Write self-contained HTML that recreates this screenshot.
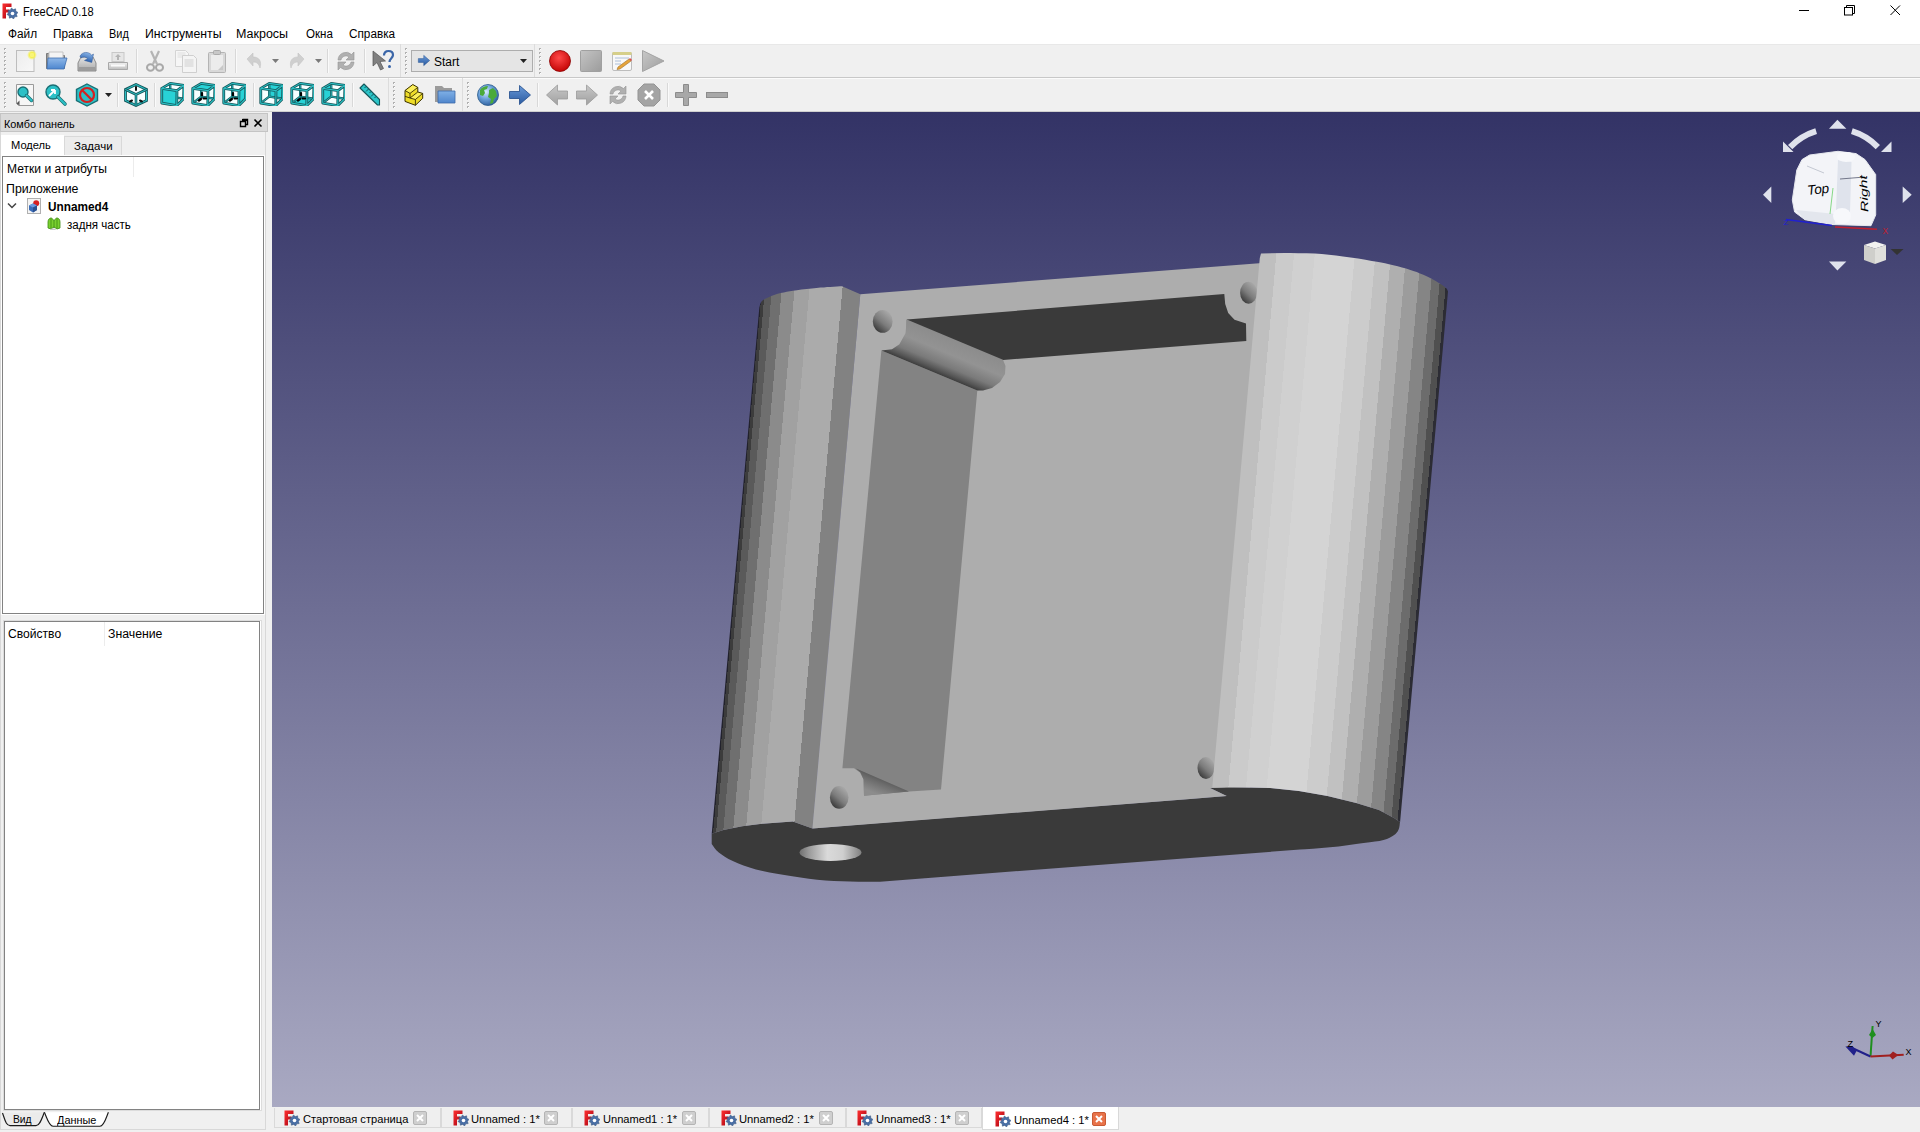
<!DOCTYPE html><html><head><meta charset="utf-8"><title>FreeCAD 0.18</title><style>
*{box-sizing:border-box}
html,body{margin:0;padding:0}
body{width:1920px;height:1132px;overflow:hidden;position:relative;background:#f0f0f0;font-family:"Liberation Sans",sans-serif}
.t{position:absolute;white-space:nowrap;line-height:1;font-family:"Liberation Sans",sans-serif}
.ic{position:absolute}
</style></head><body><div style="position:absolute;left:0px;top:0px;width:1920px;height:44px;background:#fff"></div><div style="position:absolute;left:0px;top:44px;width:1920px;height:1px;background:#e8e8e8"></div><svg class="ic" style="left:2px;top:3px" width="16" height="16" viewBox="0 0 16 16"><defs><linearGradient id="gFt" x1="0" y1="0" x2="1" y2="1"><stop offset="0" stop-color="#ff3030"/><stop offset="1" stop-color="#a00010"/></linearGradient></defs><path d="M0.5 0.5h9v3.5h-5.5v2.5h3.5v3h-3.5v6h-3.5z" fill="url(#gFt)"/><polygon points="15.99,9.41 14.42,11.28 15.16,13.61 12.72,13.83 11.59,15.99 9.72,14.42 7.39,15.16 7.17,12.72 5.01,11.59 6.58,9.72 5.84,7.39 8.28,7.17 9.41,5.01 11.28,6.58 13.61,5.84 13.83,8.28" fill="#4a6fa5" stroke="#33507a" stroke-width="0.5"/><circle cx="10.5" cy="10.5" r="1.8" fill="#fff"/></svg><svg class="ic" style="left:1790px;top:0" width="130" height="22"><path d="M9 10.5h10" stroke="#000" stroke-width="1"/><rect x="54.5" y="7.5" width="8" height="7.5" fill="none" stroke="#000"/><path d="M56.5 7.5v-2h8v8h-2" fill="none" stroke="#000"/><path d="M100.5 5.5l9.5 9.5M110 5.5l-9.5 9.5" stroke="#000" stroke-width="1"/></svg><div style="position:absolute;left:0px;top:77px;width:1920px;height:1px;background:#c8c8c8"></div><div style="position:absolute;left:0px;top:78px;width:1920px;height:1px;background:#fbfbfb"></div><div style="position:absolute;left:0px;top:111px;width:1920px;height:1px;background:#cfcfcf"></div><div style="position:absolute;left:4px;top:48px;width:2px;height:2px;background:#b0b0b0"></div><div style="position:absolute;left:5px;top:49px;width:1px;height:1px;background:#fff"></div><div style="position:absolute;left:4px;top:52px;width:2px;height:2px;background:#b0b0b0"></div><div style="position:absolute;left:5px;top:53px;width:1px;height:1px;background:#fff"></div><div style="position:absolute;left:4px;top:56px;width:2px;height:2px;background:#b0b0b0"></div><div style="position:absolute;left:5px;top:57px;width:1px;height:1px;background:#fff"></div><div style="position:absolute;left:4px;top:60px;width:2px;height:2px;background:#b0b0b0"></div><div style="position:absolute;left:5px;top:61px;width:1px;height:1px;background:#fff"></div><div style="position:absolute;left:4px;top:64px;width:2px;height:2px;background:#b0b0b0"></div><div style="position:absolute;left:5px;top:65px;width:1px;height:1px;background:#fff"></div><div style="position:absolute;left:4px;top:68px;width:2px;height:2px;background:#b0b0b0"></div><div style="position:absolute;left:5px;top:69px;width:1px;height:1px;background:#fff"></div><div style="position:absolute;left:4px;top:72px;width:2px;height:2px;background:#b0b0b0"></div><div style="position:absolute;left:5px;top:73px;width:1px;height:1px;background:#fff"></div><svg class="ic" style="left:14px;top:49px" width="24" height="24" viewBox="0 0 24 24"><defs><radialGradient id="gsun"><stop offset="0" stop-color="#ffffa0"/><stop offset="0.5" stop-color="#f5f04a"/><stop offset="1" stop-color="#f5f04a" stop-opacity="0"/></radialGradient><linearGradient id="gpg" x1="0" y1="0" x2="1" y2="1"><stop offset="0" stop-color="#ececec"/><stop offset="1" stop-color="#f8f8f8"/></linearGradient></defs><rect x="2.5" y="1.5" width="17.5" height="21" fill="url(#gpg)" stroke="#bdbdbd"/><circle cx="18" cy="6" r="5" fill="url(#gsun)"/><circle cx="18" cy="6" r="2.2" fill="#f8f47a"/></svg><svg class="ic" style="left:44px;top:48px" width="24" height="24" viewBox="0 0 24 24"><defs><linearGradient id="gfo" x1="0" y1="0" x2="0" y2="1"><stop offset="0" stop-color="#8fb8e8"/><stop offset="1" stop-color="#4d86cf"/></linearGradient></defs><path d="M2.5 5.5h8l2 2h8v13h-18z" fill="#9a9a9a" stroke="#7a7a7a"/><path d="M5 4h14v12H5z" fill="#f4f4f4" stroke="#c4c4c4"/><path d="M4 10h19l-3 11H3z" fill="url(#gfo)" stroke="#3f6fb0" stroke-width="0.8"/></svg><svg class="ic" style="left:75px;top:49px" width="24" height="24" viewBox="0 0 24 24"><defs><linearGradient id="gsv" x1="0" y1="0" x2="0" y2="1"><stop offset="0" stop-color="#e4e4e4"/><stop offset="1" stop-color="#a8a8a8"/></linearGradient><linearGradient id="gar" x1="0" y1="0" x2="0" y2="1"><stop offset="0" stop-color="#8ab4e6"/><stop offset="1" stop-color="#2f64b0"/></linearGradient></defs><path d="M3 14l3-6h12l3 6v8H3z" fill="url(#gsv)" stroke="#8a8a8a"/><rect x="4" y="18" width="16" height="3" fill="#9c9c9c"/><path d="M5 9c1-5 7-7 11-4l1.5-1.5L18 12h-7.5l2.5-2.5c-2-1.5-5-1-6.5 1z" fill="url(#gar)" stroke="#2f5a9a" stroke-width="0.5" transform="rotate(15 12 8)"/></svg><svg class="ic" style="left:106px;top:49px" width="24" height="24" viewBox="0 0 24 24"><defs><linearGradient id="gex" x1="0" y1="0" x2="0" y2="1"><stop offset="0" stop-color="#f0f0f0"/><stop offset="1" stop-color="#bdbdbd"/></linearGradient></defs><rect x="6" y="3.5" width="12" height="9" fill="#e6e6e6" stroke="#c8c8c8"/><path d="M12 5l3 3h-2v3h-2V8H9z" fill="#b4b4b4"/><path d="M2.5 13.5h19v7h-19z" fill="url(#gex)" stroke="#a8a8a8"/><rect x="5" y="15.5" width="14" height="2" fill="#fafafa"/></svg><div style="position:absolute;left:136px;top:49px;width:1px;height:24px;background:#d8d8d8"></div><div style="position:absolute;left:137px;top:49px;width:1px;height:24px;background:#fafafa"></div><svg class="ic" style="left:143px;top:49px" width="24" height="24" viewBox="0 0 24 24"><path d="M8 2l6 13M16 2l-6 13" stroke="#b4b4b4" stroke-width="2.2" fill="none"/><ellipse cx="7.5" cy="18.5" rx="3.5" ry="3.2" fill="none" stroke="#a8a8a8" stroke-width="2"/><ellipse cx="16.5" cy="18.5" rx="3.5" ry="3.2" fill="none" stroke="#a8a8a8" stroke-width="2"/></svg><svg class="ic" style="left:174px;top:49px" width="24" height="24" viewBox="0 0 24 24"><path d="M1.5 1.5h10l3 3v13h-13z" fill="#f6f6f6" stroke="#d4d4d4"/><path d="M3.5 4h8M3.5 6h8M3.5 8h8" stroke="#dedede"/><path d="M8.5 6.5h11l3 3v14h-14z" fill="#f4f4f4" stroke="#cfcfcf"/><rect x="10.5" y="10" width="9" height="8" fill="#e2e2e2"/></svg><svg class="ic" style="left:205px;top:49px" width="24" height="24" viewBox="0 0 24 24"><rect x="3.5" y="3.5" width="17" height="20" rx="1" fill="#d8d8d8" stroke="#b4b4b4"/><rect x="6" y="6" width="12" height="15" fill="#ececec"/><rect x="8.5" y="1.5" width="7" height="4" rx="1" fill="#c8c8c8" stroke="#ababab"/><path d="M13 21l5-5v5z" fill="#c8c8c8"/></svg><div style="position:absolute;left:235px;top:49px;width:1px;height:24px;background:#d8d8d8"></div><div style="position:absolute;left:236px;top:49px;width:1px;height:24px;background:#fafafa"></div><svg class="ic" style="left:242px;top:49px" width="24" height="24" viewBox="0 0 24 24"><path d="M5 10l6-6v4c6 0 9 4 7 11-1-4-3-6-7-6v4z" fill="#cfcfcf" stroke="#c4c4c4" stroke-width="0.6"/></svg><svg class="ic" style="left:272px;top:59px" width="7" height="4" viewBox="0 0 7 4"><path d="M0 0h7l-3.5 4z" fill="#7a7a7a"/></svg><svg class="ic" style="left:285px;top:49px" width="24" height="24" viewBox="0 0 24 24"><path d="M19 10l-6-6v4c-6 0-9 4-7 11 1-4 3-6 7-6v4z" fill="#cfcfcf" stroke="#c4c4c4" stroke-width="0.6"/></svg><svg class="ic" style="left:315px;top:59px" width="7" height="4" viewBox="0 0 7 4"><path d="M0 0h7l-3.5 4z" fill="#7a7a7a"/></svg><div style="position:absolute;left:327px;top:49px;width:1px;height:24px;background:#d8d8d8"></div><div style="position:absolute;left:328px;top:49px;width:1px;height:24px;background:#fafafa"></div><svg class="ic" style="left:334px;top:49px" width="24" height="24" viewBox="0 0 24 24"><path d="M4 11a8 8 0 0 1 13.5-5.5L20 3v8h-8l3-3A5 5 0 0 0 7 11z" fill="#b0b0b0" stroke="#969696" stroke-width="0.6"/><path d="M20 13a8 8 0 0 1-13.5 5.5L4 21v-8h8l-3 3a5 5 0 0 0 8-3z" fill="#b0b0b0" stroke="#969696" stroke-width="0.6"/></svg><div style="position:absolute;left:364px;top:49px;width:1px;height:24px;background:#d8d8d8"></div><div style="position:absolute;left:365px;top:49px;width:1px;height:24px;background:#fafafa"></div><svg class="ic" style="left:371px;top:49px" width="24" height="24" viewBox="0 0 24 24"><path d="M2 2l0 15 4-3.5 3.5 7.5 3-1.5-3.5-7 5.5-.5z" fill="#808080" stroke="#555" stroke-width="0.7"/><path d="M13 6.5c0-3 2-4.5 4.5-4.5S22 3.5 22 6c0 3-3.5 3.5-3.5 7" fill="none" stroke="#3b66a8" stroke-width="2.2"/><circle cx="18.5" cy="17.5" r="1.5" fill="#3b66a8"/></svg><div style="position:absolute;left:400px;top:44px;width:1px;height:33px;background:#dcdcdc"></div><div style="position:absolute;left:405px;top:48px;width:2px;height:2px;background:#b0b0b0"></div><div style="position:absolute;left:406px;top:49px;width:1px;height:1px;background:#fff"></div><div style="position:absolute;left:405px;top:52px;width:2px;height:2px;background:#b0b0b0"></div><div style="position:absolute;left:406px;top:53px;width:1px;height:1px;background:#fff"></div><div style="position:absolute;left:405px;top:56px;width:2px;height:2px;background:#b0b0b0"></div><div style="position:absolute;left:406px;top:57px;width:1px;height:1px;background:#fff"></div><div style="position:absolute;left:405px;top:60px;width:2px;height:2px;background:#b0b0b0"></div><div style="position:absolute;left:406px;top:61px;width:1px;height:1px;background:#fff"></div><div style="position:absolute;left:405px;top:64px;width:2px;height:2px;background:#b0b0b0"></div><div style="position:absolute;left:406px;top:65px;width:1px;height:1px;background:#fff"></div><div style="position:absolute;left:405px;top:68px;width:2px;height:2px;background:#b0b0b0"></div><div style="position:absolute;left:406px;top:69px;width:1px;height:1px;background:#fff"></div><div style="position:absolute;left:405px;top:72px;width:2px;height:2px;background:#b0b0b0"></div><div style="position:absolute;left:406px;top:73px;width:1px;height:1px;background:#fff"></div><div style="position:absolute;left:411px;top:50px;width:122px;height:22px;background:#e5e5e5;border:1px solid #adadad"></div><svg class="ic" style="left:417px;top:54px" width="14" height="13" viewBox="0 0 24 24"><defs><linearGradient id="gba" x1="0" y1="0" x2="0" y2="1"><stop offset="0" stop-color="#6a9ad8"/><stop offset="1" stop-color="#2a5aa0"/></linearGradient></defs><path d="M1.5 8.5h10v-6l11 9.5-11 9.5v-6h-10z" fill="url(#gba)" stroke="#1f4a8a" stroke-width="0.8"/></svg><svg class="ic" style="left:520px;top:59px" width="7" height="4" viewBox="0 0 7 4"><path d="M0 0h7l-3.5 4z" fill="#222"/></svg><div style="position:absolute;left:534px;top:44px;width:1px;height:33px;background:#dcdcdc"></div><div style="position:absolute;left:539px;top:48px;width:2px;height:2px;background:#b0b0b0"></div><div style="position:absolute;left:540px;top:49px;width:1px;height:1px;background:#fff"></div><div style="position:absolute;left:539px;top:52px;width:2px;height:2px;background:#b0b0b0"></div><div style="position:absolute;left:540px;top:53px;width:1px;height:1px;background:#fff"></div><div style="position:absolute;left:539px;top:56px;width:2px;height:2px;background:#b0b0b0"></div><div style="position:absolute;left:540px;top:57px;width:1px;height:1px;background:#fff"></div><div style="position:absolute;left:539px;top:60px;width:2px;height:2px;background:#b0b0b0"></div><div style="position:absolute;left:540px;top:61px;width:1px;height:1px;background:#fff"></div><div style="position:absolute;left:539px;top:64px;width:2px;height:2px;background:#b0b0b0"></div><div style="position:absolute;left:540px;top:65px;width:1px;height:1px;background:#fff"></div><div style="position:absolute;left:539px;top:68px;width:2px;height:2px;background:#b0b0b0"></div><div style="position:absolute;left:540px;top:69px;width:1px;height:1px;background:#fff"></div><div style="position:absolute;left:539px;top:72px;width:2px;height:2px;background:#b0b0b0"></div><div style="position:absolute;left:540px;top:73px;width:1px;height:1px;background:#fff"></div><svg class="ic" style="left:548px;top:49px" width="24" height="24" viewBox="0 0 24 24"><defs><radialGradient id="grec" cx="0.45" cy="0.35" r="0.7"><stop offset="0" stop-color="#ff4a4a"/><stop offset="1" stop-color="#c00000"/></radialGradient></defs><circle cx="12" cy="12" r="10.5" fill="url(#grec)" stroke="#8a0000" stroke-width="0.8"/></svg><svg class="ic" style="left:579px;top:49px" width="24" height="24" viewBox="0 0 24 24"><defs><linearGradient id="gst" x1="0" y1="0" x2="1" y2="1"><stop offset="0" stop-color="#c4c4c4"/><stop offset="1" stop-color="#9c9c9c"/></linearGradient></defs><rect x="1.5" y="1.5" width="21" height="21" rx="1" fill="url(#gst)" stroke="#a0a0a0"/></svg><svg class="ic" style="left:610px;top:49px" width="24" height="24" viewBox="0 0 24 24"><rect x="2.5" y="3.5" width="19" height="18" rx="1.5" fill="#f8f8f8" stroke="#bdbdbd"/><rect x="2.5" y="3" width="19" height="3" fill="#d6cf8a"/><path d="M5 9h14M5 12h6M5 15h6" stroke="#9ab0d0" stroke-width="0.8"/><path d="M8 18l11-8 2 2-11 8-3 .5z" fill="#e6a43a" stroke="#a0702a" stroke-width="0.6"/><path d="M19 10l2 2 1-1-2-2z" fill="#e04a4a"/></svg><svg class="ic" style="left:641px;top:49px" width="24" height="24" viewBox="0 0 24 24"><defs><linearGradient id="gpl" x1="0" y1="0" x2="1" y2="1"><stop offset="0" stop-color="#c8c8c8"/><stop offset="1" stop-color="#9e9e9e"/></linearGradient></defs><path d="M1.5 1.5L23 12 1.5 22.5z" fill="url(#gpl)" stroke="#a4a4a4"/></svg><div style="position:absolute;left:4px;top:82px;width:2px;height:2px;background:#b0b0b0"></div><div style="position:absolute;left:5px;top:83px;width:1px;height:1px;background:#fff"></div><div style="position:absolute;left:4px;top:86px;width:2px;height:2px;background:#b0b0b0"></div><div style="position:absolute;left:5px;top:87px;width:1px;height:1px;background:#fff"></div><div style="position:absolute;left:4px;top:90px;width:2px;height:2px;background:#b0b0b0"></div><div style="position:absolute;left:5px;top:91px;width:1px;height:1px;background:#fff"></div><div style="position:absolute;left:4px;top:94px;width:2px;height:2px;background:#b0b0b0"></div><div style="position:absolute;left:5px;top:95px;width:1px;height:1px;background:#fff"></div><div style="position:absolute;left:4px;top:98px;width:2px;height:2px;background:#b0b0b0"></div><div style="position:absolute;left:5px;top:99px;width:1px;height:1px;background:#fff"></div><div style="position:absolute;left:4px;top:102px;width:2px;height:2px;background:#b0b0b0"></div><div style="position:absolute;left:5px;top:103px;width:1px;height:1px;background:#fff"></div><div style="position:absolute;left:4px;top:106px;width:2px;height:2px;background:#b0b0b0"></div><div style="position:absolute;left:5px;top:107px;width:1px;height:1px;background:#fff"></div><svg class="ic" style="left:14px;top:83px" width="24" height="24" viewBox="0 0 24 24"><path d="M2.5 1.5h17v21h-15l-2-2z" fill="#f6f6f6" stroke="#9a9a9a"/><path d="M2.5 20.5l3-3v5z" fill="#555"/><circle cx="9" cy="9" r="5" fill="#2cc0c6" stroke="#1a6f74" stroke-width="1.4"/><path d="M12.5 12.5l5 5" stroke="#1a6f74" stroke-width="3.4" stroke-linecap="round"/><path d="M12.5 12.5l5 5" stroke="#2cc0c6" stroke-width="2" stroke-linecap="round"/></svg><svg class="ic" style="left:44px;top:83px" width="24" height="24" viewBox="0 0 24 24"><circle cx="9" cy="9" r="7" fill="#2cc0c6" stroke="#1a6f74" stroke-width="1.4"/><path d="M14 14l7 7" stroke="#1a6f74" stroke-width="3.6" stroke-linecap="round"/><path d="M14 14l7 7" stroke="#2cc0c6" stroke-width="2.2" stroke-linecap="round"/><path d="M5 13l6-6M11 7h-4M11 7v4" stroke="#fff" stroke-width="1.8" fill="none"/></svg><svg class="ic" style="left:75px;top:83px" width="24" height="24" viewBox="0 0 24 24"><polygon points="12,1 22.5,6.5 22.5,17.5 12,23 1.5,17.5 1.5,6.5" fill="#2cc0c6" stroke="#1a6f74" stroke-width="1.4"/><circle cx="12" cy="12" r="7" fill="none" stroke="#d62020" stroke-width="2.2"/><path d="M7 7l10 10" stroke="#d62020" stroke-width="2.2"/></svg><svg class="ic" style="left:105px;top:93px" width="7" height="4" viewBox="0 0 7 4"><path d="M0 0h7l-3.5 4z" fill="#222"/></svg><div style="position:absolute;left:117px;top:83px;width:1px;height:24px;background:#d8d8d8"></div><div style="position:absolute;left:118px;top:83px;width:1px;height:24px;background:#fafafa"></div><svg class="ic" style="left:124px;top:83px" width="24" height="24" viewBox="0 0 24 24"><polygon points="12,1.5 22.5,6.5 22.5,17.5 12,22.5 1.5,17.5 1.5,6.5" fill="#f6ffff" stroke="#15585c" stroke-width="2.8"/><polygon points="12,1.5 22.5,6.5 22.5,17.5 12,22.5 1.5,17.5 1.5,6.5" fill="none" stroke="#2bbfc3" stroke-width="1.1"/><path d="M1.5 6.5L12 11.5l10.5-5M12 11.5v11" fill="none" stroke="#15585c" stroke-width="2.6"/><path d="M1.5 6.5L12 11.5l10.5-5M12 11.5v11" fill="none" stroke="#2bbfc3" stroke-width="1"/><path d="M12 4v3M6 18.5l2-1M18 18.5l-2-1" stroke="#111" stroke-width="2" stroke-linecap="round"/></svg><div style="position:absolute;left:154px;top:83px;width:1px;height:24px;background:#d8d8d8"></div><div style="position:absolute;left:155px;top:83px;width:1px;height:24px;background:#fafafa"></div><svg class="ic" style="left:160px;top:82px" width="24" height="24" viewBox="0 0 24 24"><polygon points="1.75,6.4 10.2,1.4 23.9,3.3 23.6,16.75 16.75,23.6 1.75,21.1" fill="#f6ffff"/><path d="M10.2 1.4L10.2 14.6L23.6 16.75M10.2 14.6L1.75 21.1" fill="none" stroke="#15585c" stroke-width="2.4"/><path d="M10.2 1.4L10.2 14.6L23.6 16.75M10.2 14.6L1.75 21.1" fill="none" stroke="#2bbfc3" stroke-width="0.9"/><polygon points="1.75,6.4 17,8.6 16.75,23.6 1.75,21.1" fill="#28d2d6"/><path d="M1.75,6.4 17,8.6 16.75,23.6 1.75,21.1ZM1.75 6.4L10.2 1.4L23.9 3.3L23.6 16.75L16.75 23.6M17 8.6L23.9 3.3" fill="none" stroke="#15585c" stroke-width="2.8" stroke-linejoin="round"/><path d="M1.75,6.4 17,8.6 16.75,23.6 1.75,21.1ZM1.75 6.4L10.2 1.4L23.9 3.3L23.6 16.75L16.75 23.6M17 8.6L23.9 3.3" fill="none" stroke="#2bbfc3" stroke-width="1.1" stroke-linejoin="round"/></svg><svg class="ic" style="left:191px;top:82px" width="24" height="24" viewBox="0 0 24 24"><polygon points="1.75,6.4 10.2,1.4 23.9,3.3 23.6,16.75 16.75,23.6 1.75,21.1" fill="#f6ffff"/><path d="M10.2 1.4L10.2 14.6L23.6 16.75M10.2 14.6L1.75 21.1" fill="none" stroke="#15585c" stroke-width="2.4"/><path d="M10.2 1.4L10.2 14.6L23.6 16.75M10.2 14.6L1.75 21.1" fill="none" stroke="#2bbfc3" stroke-width="0.9"/><polygon points="1.75,6.4 10.2,1.4 23.9,3.3 17,8.6" fill="#28d2d6"/><path d="M1.75,6.4 17,8.6 16.75,23.6 1.75,21.1ZM1.75 6.4L10.2 1.4L23.9 3.3L23.6 16.75L16.75 23.6M17 8.6L23.9 3.3" fill="none" stroke="#15585c" stroke-width="2.8" stroke-linejoin="round"/><path d="M1.75,6.4 17,8.6 16.75,23.6 1.75,21.1ZM1.75 6.4L10.2 1.4L23.9 3.3L23.6 16.75L16.75 23.6M17 8.6L23.9 3.3" fill="none" stroke="#2bbfc3" stroke-width="1.1" stroke-linejoin="round"/><path d="M11 11v2.5M8 18.5l2-1.5M12.5 16.5h2.5" stroke="#000" stroke-width="2.2" stroke-linecap="round"/></svg><svg class="ic" style="left:222px;top:82px" width="24" height="24" viewBox="0 0 24 24"><polygon points="1.75,6.4 10.2,1.4 23.9,3.3 23.6,16.75 16.75,23.6 1.75,21.1" fill="#f6ffff"/><path d="M10.2 1.4L10.2 14.6L23.6 16.75M10.2 14.6L1.75 21.1" fill="none" stroke="#15585c" stroke-width="2.4"/><path d="M10.2 1.4L10.2 14.6L23.6 16.75M10.2 14.6L1.75 21.1" fill="none" stroke="#2bbfc3" stroke-width="0.9"/><polygon points="17,8.6 23.9,3.3 23.6,16.75 16.75,23.6" fill="#28d2d6"/><path d="M1.75,6.4 17,8.6 16.75,23.6 1.75,21.1ZM1.75 6.4L10.2 1.4L23.9 3.3L23.6 16.75L16.75 23.6M17 8.6L23.9 3.3" fill="none" stroke="#15585c" stroke-width="2.8" stroke-linejoin="round"/><path d="M1.75,6.4 17,8.6 16.75,23.6 1.75,21.1ZM1.75 6.4L10.2 1.4L23.9 3.3L23.6 16.75L16.75 23.6M17 8.6L23.9 3.3" fill="none" stroke="#2bbfc3" stroke-width="1.1" stroke-linejoin="round"/><path d="M11 11v2.5M8 18.5l2-1.5M12.5 16.5h2.5" stroke="#000" stroke-width="2.2" stroke-linecap="round"/></svg><div style="position:absolute;left:253px;top:83px;width:1px;height:24px;background:#d8d8d8"></div><div style="position:absolute;left:254px;top:83px;width:1px;height:24px;background:#fafafa"></div><svg class="ic" style="left:259px;top:82px" width="24" height="24" viewBox="0 0 24 24"><polygon points="1.75,6.4 10.2,1.4 23.9,3.3 23.6,16.75 16.75,23.6 1.75,21.1" fill="#f6ffff"/><polygon points="10.2,1.4 23.9,3.3 23.6,16.75 10.2,14.6" fill="#28d2d6"/><path d="M10.2 1.4L10.2 14.6L23.6 16.75M10.2 14.6L1.75 21.1" fill="none" stroke="#15585c" stroke-width="2.4"/><path d="M10.2 1.4L10.2 14.6L23.6 16.75M10.2 14.6L1.75 21.1" fill="none" stroke="#2bbfc3" stroke-width="0.9"/><path d="M1.75,6.4 17,8.6 16.75,23.6 1.75,21.1ZM1.75 6.4L10.2 1.4L23.9 3.3L23.6 16.75L16.75 23.6M17 8.6L23.9 3.3" fill="none" stroke="#15585c" stroke-width="2.8" stroke-linejoin="round"/><path d="M1.75,6.4 17,8.6 16.75,23.6 1.75,21.1ZM1.75 6.4L10.2 1.4L23.9 3.3L23.6 16.75L16.75 23.6M17 8.6L23.9 3.3" fill="none" stroke="#2bbfc3" stroke-width="1.1" stroke-linejoin="round"/></svg><svg class="ic" style="left:290px;top:82px" width="24" height="24" viewBox="0 0 24 24"><polygon points="1.75,6.4 10.2,1.4 23.9,3.3 23.6,16.75 16.75,23.6 1.75,21.1" fill="#f6ffff"/><polygon points="1.75,21.1 10.2,14.6 23.6,16.75 16.75,23.6" fill="#28d2d6"/><path d="M10.2 1.4L10.2 14.6L23.6 16.75M10.2 14.6L1.75 21.1" fill="none" stroke="#15585c" stroke-width="2.4"/><path d="M10.2 1.4L10.2 14.6L23.6 16.75M10.2 14.6L1.75 21.1" fill="none" stroke="#2bbfc3" stroke-width="0.9"/><path d="M1.75,6.4 17,8.6 16.75,23.6 1.75,21.1ZM1.75 6.4L10.2 1.4L23.9 3.3L23.6 16.75L16.75 23.6M17 8.6L23.9 3.3" fill="none" stroke="#15585c" stroke-width="2.8" stroke-linejoin="round"/><path d="M1.75,6.4 17,8.6 16.75,23.6 1.75,21.1ZM1.75 6.4L10.2 1.4L23.9 3.3L23.6 16.75L16.75 23.6M17 8.6L23.9 3.3" fill="none" stroke="#2bbfc3" stroke-width="1.1" stroke-linejoin="round"/><path d="M11 11v2.5M8 18.5l2-1.5M12.5 16.5h2.5" stroke="#000" stroke-width="2.2" stroke-linecap="round"/></svg><svg class="ic" style="left:321px;top:82px" width="24" height="24" viewBox="0 0 24 24"><polygon points="1.75,6.4 10.2,1.4 23.9,3.3 23.6,16.75 16.75,23.6 1.75,21.1" fill="#f6ffff"/><polygon points="1.75,6.4 10.2,1.4 10.2,14.6 1.75,21.1" fill="#28d2d6"/><path d="M10.2 1.4L10.2 14.6L23.6 16.75M10.2 14.6L1.75 21.1" fill="none" stroke="#15585c" stroke-width="2.4"/><path d="M10.2 1.4L10.2 14.6L23.6 16.75M10.2 14.6L1.75 21.1" fill="none" stroke="#2bbfc3" stroke-width="0.9"/><path d="M1.75,6.4 17,8.6 16.75,23.6 1.75,21.1ZM1.75 6.4L10.2 1.4L23.9 3.3L23.6 16.75L16.75 23.6M17 8.6L23.9 3.3" fill="none" stroke="#15585c" stroke-width="2.8" stroke-linejoin="round"/><path d="M1.75,6.4 17,8.6 16.75,23.6 1.75,21.1ZM1.75 6.4L10.2 1.4L23.9 3.3L23.6 16.75L16.75 23.6M17 8.6L23.9 3.3" fill="none" stroke="#2bbfc3" stroke-width="1.1" stroke-linejoin="round"/></svg><div style="position:absolute;left:352px;top:83px;width:1px;height:24px;background:#d8d8d8"></div><div style="position:absolute;left:353px;top:83px;width:1px;height:24px;background:#fafafa"></div><svg class="ic" style="left:358px;top:83px" width="24" height="24" viewBox="0 0 24 24"><path d="M2 5l4-4 15.5 15.5v5.5h-2z" fill="#2cc4c8" stroke="#15585c" stroke-width="1.1" stroke-linejoin="round"/><path d="M8 3.5l-1.5 1.5M10.5 6l-2.5 2.5M13 8.5l-1.5 1.5M15.5 11l-2.5 2.5M18 13.5l-1.5 1.5" stroke="#15585c" stroke-width="1"/></svg><div style="position:absolute;left:388px;top:78px;width:1px;height:33px;background:#dcdcdc"></div><div style="position:absolute;left:393px;top:82px;width:2px;height:2px;background:#b0b0b0"></div><div style="position:absolute;left:394px;top:83px;width:1px;height:1px;background:#fff"></div><div style="position:absolute;left:393px;top:86px;width:2px;height:2px;background:#b0b0b0"></div><div style="position:absolute;left:394px;top:87px;width:1px;height:1px;background:#fff"></div><div style="position:absolute;left:393px;top:90px;width:2px;height:2px;background:#b0b0b0"></div><div style="position:absolute;left:394px;top:91px;width:1px;height:1px;background:#fff"></div><div style="position:absolute;left:393px;top:94px;width:2px;height:2px;background:#b0b0b0"></div><div style="position:absolute;left:394px;top:95px;width:1px;height:1px;background:#fff"></div><div style="position:absolute;left:393px;top:98px;width:2px;height:2px;background:#b0b0b0"></div><div style="position:absolute;left:394px;top:99px;width:1px;height:1px;background:#fff"></div><div style="position:absolute;left:393px;top:102px;width:2px;height:2px;background:#b0b0b0"></div><div style="position:absolute;left:394px;top:103px;width:1px;height:1px;background:#fff"></div><div style="position:absolute;left:393px;top:106px;width:2px;height:2px;background:#b0b0b0"></div><div style="position:absolute;left:394px;top:107px;width:1px;height:1px;background:#fff"></div><svg class="ic" style="left:402px;top:83px" width="24" height="24" viewBox="0 0 24 24"><polygon points="3,7.5 10.8,1.5 15.8,4.4 15.8,9 20.7,10.4 20.7,15.3 13.4,22.3 3,18.4" fill="#eedc28"/><polygon points="3,7.5 10.8,1.5 15.8,4.4 8,10.4" fill="#fbef5a"/><polygon points="8,15 15.8,9 20.7,10.4 13.4,16.5" fill="#fbef5a"/><polygon points="3,7.5 10.8,1.5 15.8,4.4 15.8,9 20.7,10.4 20.7,15.3 13.4,22.3 3,18.4" fill="none" stroke="#3a3000" stroke-width="1" stroke-linejoin="round"/><path d="M3 7.5L8 10.4L15.8 4.4M8 10.4V15L15.8 9M3 13.3L8 15M8 15L13.4 16.5L20.7 10.4M13.4 16.5V22.3" fill="none" stroke="#3a3000" stroke-width="0.9"/></svg><svg class="ic" style="left:433px;top:83px" width="24" height="24" viewBox="0 0 24 24"><defs><linearGradient id="ggr" x1="0" y1="0" x2="0" y2="1"><stop offset="0" stop-color="#7fb0e6"/><stop offset="1" stop-color="#4f86cc"/></linearGradient></defs><path d="M2 3h7l2 2h8v14H2z" fill="#8c8c8c" opacity="0.85"/><path d="M5 8h17v12H5z" fill="url(#ggr)" stroke="#3d6aa8" stroke-width="0.8"/></svg><div style="position:absolute;left:462px;top:78px;width:1px;height:33px;background:#dcdcdc"></div><div style="position:absolute;left:467px;top:82px;width:2px;height:2px;background:#b0b0b0"></div><div style="position:absolute;left:468px;top:83px;width:1px;height:1px;background:#fff"></div><div style="position:absolute;left:467px;top:86px;width:2px;height:2px;background:#b0b0b0"></div><div style="position:absolute;left:468px;top:87px;width:1px;height:1px;background:#fff"></div><div style="position:absolute;left:467px;top:90px;width:2px;height:2px;background:#b0b0b0"></div><div style="position:absolute;left:468px;top:91px;width:1px;height:1px;background:#fff"></div><div style="position:absolute;left:467px;top:94px;width:2px;height:2px;background:#b0b0b0"></div><div style="position:absolute;left:468px;top:95px;width:1px;height:1px;background:#fff"></div><div style="position:absolute;left:467px;top:98px;width:2px;height:2px;background:#b0b0b0"></div><div style="position:absolute;left:468px;top:99px;width:1px;height:1px;background:#fff"></div><div style="position:absolute;left:467px;top:102px;width:2px;height:2px;background:#b0b0b0"></div><div style="position:absolute;left:468px;top:103px;width:1px;height:1px;background:#fff"></div><div style="position:absolute;left:467px;top:106px;width:2px;height:2px;background:#b0b0b0"></div><div style="position:absolute;left:468px;top:107px;width:1px;height:1px;background:#fff"></div><svg class="ic" style="left:476px;top:83px" width="24" height="24" viewBox="0 0 24 24"><defs><radialGradient id="ggl" cx="0.4" cy="0.35" r="0.7"><stop offset="0" stop-color="#d8ecff"/><stop offset="0.5" stop-color="#6aa0d8"/><stop offset="1" stop-color="#2a5a9a"/></radialGradient></defs><circle cx="12" cy="12" r="10.5" fill="url(#ggl)" stroke="#2a5a8a" stroke-width="0.8"/><path d="M4 7c2-3 5-4 8-4l-1 3-3 1 1 3-2 3-3-1zM13 7l4-2 3 3 1 5-3 3-1 4-3 1 1-5-3-2 1-4z" fill="#4aaa3a"/></svg><svg class="ic" style="left:508px;top:83px" width="24" height="24" viewBox="0 0 24 24"><defs><linearGradient id="gba" x1="0" y1="0" x2="0" y2="1"><stop offset="0" stop-color="#6a9ad8"/><stop offset="1" stop-color="#2a5aa0"/></linearGradient></defs><path d="M1.5 8.5h10v-6l11 9.5-11 9.5v-6h-10z" fill="url(#gba)" stroke="#1f4a8a" stroke-width="0.8"/></svg><div style="position:absolute;left:537px;top:83px;width:1px;height:24px;background:#d8d8d8"></div><div style="position:absolute;left:538px;top:83px;width:1px;height:24px;background:#fafafa"></div><svg class="ic" style="left:545px;top:83px" width="24" height="24" viewBox="0 0 24 24"><defs><linearGradient id="gga" x1="0" y1="0" x2="0" y2="1"><stop offset="0" stop-color="#c8c8c8"/><stop offset="1" stop-color="#a0a0a0"/></linearGradient></defs><g transform="translate(24 0) scale(-1 1)"><path d="M1.5 8h10V2l11 10-11 10v-6h-10z" fill="url(#gga)" stroke="#9a9a9a" stroke-width="0.8"/></g></svg><svg class="ic" style="left:575px;top:83px" width="24" height="24" viewBox="0 0 24 24"><defs><linearGradient id="gga" x1="0" y1="0" x2="0" y2="1"><stop offset="0" stop-color="#c8c8c8"/><stop offset="1" stop-color="#a0a0a0"/></linearGradient></defs><g ><path d="M1.5 8h10V2l11 10-11 10v-6h-10z" fill="url(#gga)" stroke="#9a9a9a" stroke-width="0.8"/></g></svg><svg class="ic" style="left:606px;top:83px" width="24" height="24" viewBox="0 0 24 24"><path d="M4 11a8 8 0 0 1 13.5-5.5L20 3v8h-8l3-3A5 5 0 0 0 7 11z" fill="#b0b0b0" stroke="#969696" stroke-width="0.6"/><path d="M20 13a8 8 0 0 1-13.5 5.5L4 21v-8h8l-3 3a5 5 0 0 0 8-3z" fill="#b0b0b0" stroke="#969696" stroke-width="0.6"/></svg><svg class="ic" style="left:637px;top:83px" width="24" height="24" viewBox="0 0 24 24"><polygon points="7,1 17,1 23,7 23,17 17,23 7,23 1,17 1,7" fill="#a4a4a4" stroke="#949494"/><path d="M8 8l8 8M16 8l-8 8" stroke="#fff" stroke-width="2.6"/></svg><div style="position:absolute;left:667px;top:83px;width:1px;height:24px;background:#d8d8d8"></div><div style="position:absolute;left:668px;top:83px;width:1px;height:24px;background:#fafafa"></div><svg class="ic" style="left:674px;top:83px" width="24" height="24" viewBox="0 0 24 24"><path d="M9.5 1.5h5v8h8v5h-8v8h-5v-8h-8v-5h8z" fill="#a8a8a8" stroke="#8c8c8c"/></svg><svg class="ic" style="left:705px;top:83px" width="24" height="24" viewBox="0 0 24 24"><rect x="1.5" y="9.5" width="21" height="5" fill="#a8a8a8" stroke="#8c8c8c"/></svg><div style="position:absolute;left:272px;top:112px;width:1648px;height:995px;background:linear-gradient(#333366,#a9a9c2)"></div><svg width="1648" height="995" viewBox="272 112 1648 995" style="position:absolute;left:272px;top:112px"><defs><linearGradient id="gL" gradientUnits="userSpaceOnUse" x1="700" y1="300" x2="900.00" y2="318.00"><stop offset="0" stop-color="#2a2a2a"/><stop offset="0.2951" stop-color="#22222c"/><stop offset="0.3025" stop-color="#22222c"/><stop offset="0.3025" stop-color="#3c3c3c"/><stop offset="0.3174" stop-color="#3c3c3c"/><stop offset="0.3174" stop-color="#5a5a5a"/><stop offset="0.3521" stop-color="#5a5a5a"/><stop offset="0.3521" stop-color="#6f6f6f"/><stop offset="0.4008" stop-color="#6f6f6f"/><stop offset="0.4008" stop-color="#8b8b8b"/><stop offset="0.4642" stop-color="#8b8b8b"/><stop offset="0.4642" stop-color="#a1a1a1"/><stop offset="0.5381" stop-color="#a1a1a1"/><stop offset="0.5381" stop-color="#ababab"/><stop offset="0.7013" stop-color="#ababab"/><stop offset="0.7013" stop-color="#828282"/><stop offset="0.7951" stop-color="#828282"/><stop offset="0.7951" stop-color="#adadad"/></linearGradient><linearGradient id="gR" gradientUnits="userSpaceOnUse" x1="1200" y1="320" x2="1500.00" y2="347.00"><stop offset="0" stop-color="#c3c3c3"/><stop offset="0.1795" stop-color="#bfbfbf"/><stop offset="0.2328" stop-color="#bfbfbf"/><stop offset="0.2328" stop-color="#cbcbcb"/><stop offset="0.2913" stop-color="#cbcbcb"/><stop offset="0.2913" stop-color="#d0d0d0"/><stop offset="0.3598" stop-color="#d0d0d0"/><stop offset="0.3598" stop-color="#d4d4d4"/><stop offset="0.4923" stop-color="#d4d4d4"/><stop offset="0.4923" stop-color="#cccccc"/><stop offset="0.5605" stop-color="#cccccc"/><stop offset="0.5605" stop-color="#c1c1c1"/><stop offset="0.6117" stop-color="#c1c1c1"/><stop offset="0.6117" stop-color="#afafaf"/><stop offset="0.6623" stop-color="#afafaf"/><stop offset="0.6623" stop-color="#9c9c9c"/><stop offset="0.7109" stop-color="#9c9c9c"/><stop offset="0.7109" stop-color="#858585"/><stop offset="0.7532" stop-color="#858585"/><stop offset="0.7532" stop-color="#6c6c6c"/><stop offset="0.7813" stop-color="#6c6c6c"/><stop offset="0.7813" stop-color="#505050"/><stop offset="0.8022" stop-color="#505050"/><stop offset="0.8022" stop-color="#2c2c34"/></linearGradient><linearGradient id="gRod" gradientUnits="userSpaceOnUse" x1="906.8" y1="319.6" x2="892.0" y2="355.0"><stop offset="0" stop-color="#8c8c8c"/><stop offset="0.4" stop-color="#939393"/><stop offset="0.72" stop-color="#7a7a7a"/><stop offset="0.9" stop-color="#555555"/><stop offset="1" stop-color="#3c3c3c"/></linearGradient><linearGradient id="gRod2" gradientUnits="userSpaceOnUse" x1="880" y1="772" x2="872" y2="792"><stop offset="0" stop-color="#4a4a4a"/><stop offset="0.5" stop-color="#6e6e6e"/><stop offset="1" stop-color="#8c8c8c"/></linearGradient><linearGradient id="gHole" x1="0.8" y1="0.1" x2="0.2" y2="0.9"><stop offset="0" stop-color="#a8a8a8"/><stop offset="0.55" stop-color="#7c7c7c"/><stop offset="1" stop-color="#3c3c3c"/></linearGradient><linearGradient id="gBH" x1="0" y1="0" x2="1" y2="0"><stop offset="0" stop-color="#707070"/><stop offset="0.15" stop-color="#9a9a9a"/><stop offset="0.45" stop-color="#dadada"/><stop offset="0.7" stop-color="#cfcfcf"/><stop offset="0.88" stop-color="#a0a0a0"/><stop offset="1" stop-color="#808080"/></linearGradient></defs><polygon points="711.7,833.8 711.7,844.0 712.8,845.5 714.3,847.7 716.3,850.2 718.8,852.5 721.6,854.6 724.8,856.8 728.5,858.9 732.8,861.0 737.8,863.2 743.5,865.4 749.6,867.5 756.0,869.4 762.6,871.0 769.6,872.4 776.9,873.7 784.4,875.0 792.3,876.3 800.5,877.6 808.9,878.7 817.2,879.7 825.5,880.4 833.8,880.9 842.0,881.3 850.0,881.6 858.4,881.8 867.0,881.8 874.7,881.7 880.0,881.7 1300.0,849.5 1305.3,849.2 1312.9,848.7 1321.5,848.0 1330.0,847.3 1338.5,846.4 1347.4,845.3 1356.1,844.1 1363.6,843.1 1369.8,842.3 1375.0,841.6 1379.5,840.9 1383.5,840.0 1386.9,838.9 1389.6,837.8 1391.8,836.5 1393.8,835.2 1395.5,833.9 1396.8,832.6 1397.8,831.2 1398.6,829.6 1399.2,827.7 1399.6,825.4 1399.8,823.4 1400.0,822.0 1394.0,818.0 1379.0,810.0 1356.2,803.0 1327.5,796.1 1298.9,791.0 1270.2,788.1 1226.7,787.0 1210.0,788.1 1226.7,796.1 1190.0,799.1 880.0,823.0 812.5,828.6 792.8,821.6 765.6,823.4 742.2,826.2 723.4,830.0" fill="#3a3a3a"/><ellipse cx="830.5" cy="852.5" rx="31" ry="8.5" fill="url(#gBH)"/><polygon points="759.3,307.7 759.6,306.5 760.0,304.7 760.7,302.8 761.9,301.1 763.9,299.6 766.4,298.2 769.2,296.9 772.0,295.7 774.8,294.7 777.7,293.8 780.7,293.1 783.8,292.4 786.8,291.8 789.9,291.2 793.1,290.7 796.9,290.2 801.5,289.6 806.7,289.0 811.9,288.5 816.6,288.0 820.5,287.6 824.0,287.4 827.2,287.1 830.4,286.9 833.7,286.7 837.1,286.5 840.0,286.3 842.0,286.2 860.3,294.2 812.5,828.6 792.8,821.6 765.6,823.4 742.2,826.2 723.4,830.0 711.7,833.8" fill="url(#gL)"/><polygon points="860.3,294.2 1300.0,260.0 1250.0,787.3 1210.0,788.1 1226.7,796.1 1190.0,799.1 812.5,828.6" fill="#adadad"/><polygon points="906.8,319.6 1224.3,294.0 1225.2,304.0 1228.2,313.0 1234.5,319.7 1246.0,323.5 1246.3,341.0 1003.0,360.0 970.0,364.0 906.8,335.0" fill="#3a3a3a"/><polygon points="881.4,350.5 977.3,390.5 941.0,789.4 909.0,791.6 864.0,795.8 863.6,779.4 860.0,772.5 854.0,768.2 842.4,768.2" fill="#838383"/><polygon points="906.8,319.6 1003.0,359.8 1005.5,366.0 1005.0,374.0 1000.0,382.0 992.0,388.0 983.0,390.5 977.3,390.5 881.4,350.5 892.0,349.3 899.4,344.3 905.5,333.2" fill="url(#gRod)"/><polygon points="856.0,768.6 909.0,791.6 864.0,795.8 863.6,779.4 860.5,772.5" fill="url(#gRod2)"/><ellipse cx="882.7" cy="321.4" rx="9.9" ry="11.4" fill="url(#gHole)"/><ellipse cx="839.2" cy="797.4" rx="9.3" ry="11.3" fill="url(#gHole)"/><ellipse cx="1248.6" cy="292.8" rx="8.5" ry="11" fill="url(#gHole)"/><ellipse cx="1206" cy="768" rx="8.5" ry="11" fill="url(#gHole)"/><polygon points="1259.8,258.0 1261.0,253.4 1285.0,253.1 1290.3,253.1 1298.0,253.2 1306.5,253.3 1314.5,253.6 1321.7,254.1 1328.8,254.7 1335.9,255.5 1343.0,256.4 1350.5,257.4 1358.1,258.6 1365.4,259.8 1371.8,260.9 1376.9,261.8 1381.1,262.6 1385.0,263.3 1389.0,264.2 1393.3,265.2 1397.7,266.3 1402.0,267.4 1406.0,268.6 1409.7,269.7 1413.3,270.9 1416.7,272.1 1420.0,273.4 1423.3,274.8 1426.6,276.3 1429.7,277.8 1432.5,279.2 1434.9,280.5 1436.9,281.7 1438.8,282.9 1440.5,284.0 1442.2,285.1 1443.8,286.2 1445.2,287.3 1446.3,288.3 1447.1,289.3 1447.5,290.2 1447.8,291.0 1448.0,291.5 1400.1,822.0 1394.0,818.0 1379.0,810.0 1356.2,803.0 1327.5,796.1 1298.9,791.0 1270.2,788.1 1226.7,787.0 1212.3,787.5" fill="url(#gR)"/><polygon points="1829,128.8 1837.4,119.8 1846.4,128.8" fill="#dfe2ec"/><polygon points="1829,261.5 1846.4,261.5 1837.4,270.5" fill="#dfe2ec"/><polygon points="1771.3,186.6 1763,194.8 1771.3,203" fill="#dfe2ec"/><polygon points="1902.7,186.6 1911.7,194.8 1902.7,203" fill="#dfe2ec"/><path d="M1815.3 128.3 A64 64 0 0 0 1788.0 145.0 L1792.3 149.2 A58 58 0 0 1 1817.0 134.0Z" fill="#dfe2ec"/><path d="M1852.7 128.3 A64 64 0 0 1 1880.0 145.0 L1875.7 149.2 A58 58 0 0 0 1851.0 134.0Z" fill="#dfe2ec"/><polygon points="1783,152 1783,141.5 1793.5,152" fill="#dfe2ec"/><polygon points="1891.5,152 1891.5,141.5 1881,152" fill="#dfe2ec"/><polygon points="1809.6,155.0 1838.0,151.3 1856.0,153.6 1865.0,159.6 1875.7,174.6 1875.7,215.0 1871.0,225.7 1832.0,224.5 1805.0,219.7 1794.6,212.0 1792.3,200.0 1796.8,170.0 1802.0,159.6" fill="#f3f4f8" stroke="#e6e8ee" stroke-width="1"/><polygon points="1838,160 1851.5,162 1850,212 1836,210" fill="#dfe3ec"/><polygon points="1796,210 1836,214 1835,224.5 1805,219.7" fill="#e3e6ed"/><ellipse cx="1846" cy="157" rx="9" ry="5" fill="#f7f8fb"/><ellipse cx="1842" cy="216" rx="9" ry="8" fill="#f7f8fb"/><path d="M1807 166l17 7" stroke="#b8bcc8" stroke-width="0.8"/><path d="M1840 179l25-2" stroke="#555a70" stroke-width="0.8"/><path d="M1833 188l-3 26" stroke="#6ad06a" stroke-width="0.8"/><text x="1807" y="194" font-family="Liberation Sans" font-style="italic" font-size="13.5" fill="#000" transform="rotate(-6 1817 188)">Top</text><text x="0" y="0" font-family="Liberation Sans" font-style="italic" font-size="10.5" fill="#000" transform="translate(1868.2 212) rotate(-92)" textLength="37" lengthAdjust="spacingAndGlyphs">Right</text><path d="M1786 219.5l46 6" stroke="#2020d0" stroke-width="1.6"/><path d="M1835 227l42 2.2" stroke="#c02030" stroke-width="1.6"/><text x="1783.5" y="225" font-family="Liberation Sans" font-size="8" fill="#2020d0">Z</text><text x="1882.5" y="234" font-family="Liberation Sans" font-size="8.5" fill="#c02030">X</text><polygon points="1864,245 1875,241.5 1886,245 1875,248.5" fill="#f2f2f0"/><polygon points="1864,245 1875,248.5 1875,264 1864,260" fill="#cfcfcb"/><polygon points="1875,248.5 1886,245 1886,260 1875,264" fill="#e0e0dc"/><polygon points="1890.7,249 1903.5,249 1897,255" fill="#333"/><path d="M1870.5 1056.5L1872.6 1026" stroke="#1f8f1f" stroke-width="2"/><polygon points="1872.6,1029 1876,1035 1872.4,1038 1869,1035" fill="#1f8f1f"/><path d="M1870.5 1056.5L1850 1047" stroke="#20208a" stroke-width="2"/><polygon points="1845.4,1046.5 1852.5,1046 1856.5,1051 1854,1055.8" fill="#20208a"/><path d="M1870.5 1056.5L1903.7 1054.8" stroke="#a02020" stroke-width="2"/><polygon points="1889,1055.5 1893,1051.6 1898.4,1055 1892.5,1059.4" fill="#a02020"/><text x="1875.5" y="1027" font-family="Liberation Sans" font-size="9" fill="#000">Y</text><text x="1847.5" y="1046.5" font-family="Liberation Sans" font-size="9" fill="#000">Z</text><text x="1905.5" y="1055" font-family="Liberation Sans" font-size="9" fill="#000">X</text></svg><div style="position:absolute;left:0px;top:113px;width:268px;height:19px;background:#dadada;border:1px solid #c4c4c4"></div><svg class="ic" style="left:236.5px;top:116.5px" width="28" height="12"><path d="M3.5 4.5h5v5h-5z" fill="none" stroke="#000" stroke-width="1.4"/><path d="M5.5 2.5h5v5h-2" fill="none" stroke="#000" stroke-width="1.4"/><path d="M5 2h6v2H5z" fill="#000"/><path d="M17.5 2.5l7 7M24.5 2.5l-7 7" stroke="#000" stroke-width="1.6"/></svg><div style="position:absolute;left:0px;top:132px;width:266px;height:998px;background:#f0f0f0;border:1px solid #d8d8d8;border-top:none"></div><div style="position:absolute;left:64px;top:136px;width:58px;height:20px;background:#ececec;border:1px solid #d9d9d9;border-bottom:none"></div><div style="position:absolute;left:1px;top:135px;width:63px;height:21px;background:#fff"></div><div style="position:absolute;left:1px;top:155px;width:264px;height:460px;background:#fff"></div><div style="position:absolute;left:2px;top:156px;width:262px;height:458px;background:#fff;border:1px solid #828282"></div><div style="position:absolute;left:133px;top:157px;width:1px;height:20px;background:#ececec"></div><svg class="ic" style="left:7px;top:202px" width="10" height="8"><path d="M1 1.5l4 4 4-4" fill="none" stroke="#444" stroke-width="1.5"/></svg><svg class="ic" style="left:27px;top:198px" width="14" height="16" viewBox="0 0 14 16"><rect x="0.5" y="0.5" width="13" height="15" fill="#f4f4f4" stroke="#b0b0b0"/><circle cx="9.2" cy="5.2" r="3" fill="#d82020"/><polygon points="6,5.5 10,7.5 10,12 6,14.5 2,12 2,7.5" fill="#3a6cb8"/><polygon points="6,5.5 10,7.5 6,9.5 2,7.5" fill="#6a9ae0"/><polygon points="6,9.5 10,7.5 10,12 6,14.5" fill="#2a5090"/></svg><svg class="ic" style="left:47px;top:217px" width="14" height="13" viewBox="0 0 14 13"><path d="M1 11V5c0-3 2-4 3-4s2 1 3 3c1-2 2-3 3-3s3 1 3 4v6l-3 1-3-2-3 2z" fill="#7ad030" stroke="#3a8a10" stroke-width="0.8"/><path d="M4 1.5v10M7 4v7M10 1.5v10" stroke="#3a8a10" stroke-width="0.8"/><ellipse cx="6" cy="12.3" rx="3" ry="0.8" fill="#c8c8c8"/></svg><div style="position:absolute;left:3px;top:620px;width:259px;height:491px;background:#fff;border:1px solid #dcdcdc"></div><div style="position:absolute;left:4px;top:621px;width:256px;height:489px;background:#fff;border:1px solid #828282"></div><div style="position:absolute;left:104px;top:622px;width:1px;height:24px;background:#ececec"></div><svg class="ic" style="left:0;top:1108px" width="120" height="24"><path d="M2.5 5 C5 12 6 17.6 10 17.6 L36 17.6 C40 17.6 42 10 44.4 4.2 Z" fill="#ebebeb"/><path d="M2.5 5 C5 12 6 17.6 10 17.6 L36 17.6 C40 17.6 42 10 44.4 4.2" fill="none" stroke="#1a1a1a" stroke-width="1.15"/><path d="M44.4 4.2 C47 10 49 18.2 53 18.2 L100 18.2 C104 18.2 106 10 108.4 4.2" fill="#fff" stroke="#1a1a1a" stroke-width="1.15"/></svg><div style="position:absolute;left:274px;top:1108px;width:167px;height:20px;background:#efefef;border:1px solid #d9d9d9;border-top:none"></div><svg class="ic" style="left:284px;top:1109.5px" width="16" height="16" viewBox="0 0 16 16"><defs><linearGradient id="gFm274" x1="0" y1="0" x2="1" y2="1"><stop offset="0" stop-color="#ff3030"/><stop offset="1" stop-color="#a00010"/></linearGradient></defs><path d="M0.5 0.5h9v3.5h-5.5v2.5h3.5v3h-3.5v6h-3.5z" fill="url(#gFm274)"/><polygon points="15.99,9.41 14.42,11.28 15.16,13.61 12.72,13.83 11.59,15.99 9.72,14.42 7.39,15.16 7.17,12.72 5.01,11.59 6.58,9.72 5.84,7.39 8.28,7.17 9.41,5.01 11.28,6.58 13.61,5.84 13.83,8.28" fill="#4a6fa5" stroke="#33507a" stroke-width="0.5"/><circle cx="10.5" cy="10.5" r="1.8" fill="#fff"/></svg><svg class="ic" style="left:413px;top:1111px" width="14" height="14"><rect x="0.5" y="0.5" width="13" height="13" rx="1.5" fill="#cfcfcf" stroke="#b4b4b4"/><path d="M4 4l6 6M10 4l-6 6" stroke="#fff" stroke-width="2"/></svg><div style="position:absolute;left:441px;top:1108px;width:131px;height:20px;background:#efefef;border:1px solid #d9d9d9;border-top:none"></div><svg class="ic" style="left:453px;top:1109.5px" width="16" height="16" viewBox="0 0 16 16"><defs><linearGradient id="gFm441" x1="0" y1="0" x2="1" y2="1"><stop offset="0" stop-color="#ff3030"/><stop offset="1" stop-color="#a00010"/></linearGradient></defs><path d="M0.5 0.5h9v3.5h-5.5v2.5h3.5v3h-3.5v6h-3.5z" fill="url(#gFm441)"/><polygon points="15.99,9.41 14.42,11.28 15.16,13.61 12.72,13.83 11.59,15.99 9.72,14.42 7.39,15.16 7.17,12.72 5.01,11.59 6.58,9.72 5.84,7.39 8.28,7.17 9.41,5.01 11.28,6.58 13.61,5.84 13.83,8.28" fill="#4a6fa5" stroke="#33507a" stroke-width="0.5"/><circle cx="10.5" cy="10.5" r="1.8" fill="#fff"/></svg><svg class="ic" style="left:544px;top:1111px" width="14" height="14"><rect x="0.5" y="0.5" width="13" height="13" rx="1.5" fill="#cfcfcf" stroke="#b4b4b4"/><path d="M4 4l6 6M10 4l-6 6" stroke="#fff" stroke-width="2"/></svg><div style="position:absolute;left:572px;top:1108px;width:137px;height:20px;background:#efefef;border:1px solid #d9d9d9;border-top:none"></div><svg class="ic" style="left:584px;top:1109.5px" width="16" height="16" viewBox="0 0 16 16"><defs><linearGradient id="gFm572" x1="0" y1="0" x2="1" y2="1"><stop offset="0" stop-color="#ff3030"/><stop offset="1" stop-color="#a00010"/></linearGradient></defs><path d="M0.5 0.5h9v3.5h-5.5v2.5h3.5v3h-3.5v6h-3.5z" fill="url(#gFm572)"/><polygon points="15.99,9.41 14.42,11.28 15.16,13.61 12.72,13.83 11.59,15.99 9.72,14.42 7.39,15.16 7.17,12.72 5.01,11.59 6.58,9.72 5.84,7.39 8.28,7.17 9.41,5.01 11.28,6.58 13.61,5.84 13.83,8.28" fill="#4a6fa5" stroke="#33507a" stroke-width="0.5"/><circle cx="10.5" cy="10.5" r="1.8" fill="#fff"/></svg><svg class="ic" style="left:681.5px;top:1111px" width="14" height="14"><rect x="0.5" y="0.5" width="13" height="13" rx="1.5" fill="#cfcfcf" stroke="#b4b4b4"/><path d="M4 4l6 6M10 4l-6 6" stroke="#fff" stroke-width="2"/></svg><div style="position:absolute;left:709px;top:1108px;width:137px;height:20px;background:#efefef;border:1px solid #d9d9d9;border-top:none"></div><svg class="ic" style="left:721px;top:1109.5px" width="16" height="16" viewBox="0 0 16 16"><defs><linearGradient id="gFm709" x1="0" y1="0" x2="1" y2="1"><stop offset="0" stop-color="#ff3030"/><stop offset="1" stop-color="#a00010"/></linearGradient></defs><path d="M0.5 0.5h9v3.5h-5.5v2.5h3.5v3h-3.5v6h-3.5z" fill="url(#gFm709)"/><polygon points="15.99,9.41 14.42,11.28 15.16,13.61 12.72,13.83 11.59,15.99 9.72,14.42 7.39,15.16 7.17,12.72 5.01,11.59 6.58,9.72 5.84,7.39 8.28,7.17 9.41,5.01 11.28,6.58 13.61,5.84 13.83,8.28" fill="#4a6fa5" stroke="#33507a" stroke-width="0.5"/><circle cx="10.5" cy="10.5" r="1.8" fill="#fff"/></svg><svg class="ic" style="left:818.5px;top:1111px" width="14" height="14"><rect x="0.5" y="0.5" width="13" height="13" rx="1.5" fill="#cfcfcf" stroke="#b4b4b4"/><path d="M4 4l6 6M10 4l-6 6" stroke="#fff" stroke-width="2"/></svg><div style="position:absolute;left:846px;top:1108px;width:136px;height:20px;background:#efefef;border:1px solid #d9d9d9;border-top:none"></div><svg class="ic" style="left:857px;top:1109.5px" width="16" height="16" viewBox="0 0 16 16"><defs><linearGradient id="gFm846" x1="0" y1="0" x2="1" y2="1"><stop offset="0" stop-color="#ff3030"/><stop offset="1" stop-color="#a00010"/></linearGradient></defs><path d="M0.5 0.5h9v3.5h-5.5v2.5h3.5v3h-3.5v6h-3.5z" fill="url(#gFm846)"/><polygon points="15.99,9.41 14.42,11.28 15.16,13.61 12.72,13.83 11.59,15.99 9.72,14.42 7.39,15.16 7.17,12.72 5.01,11.59 6.58,9.72 5.84,7.39 8.28,7.17 9.41,5.01 11.28,6.58 13.61,5.84 13.83,8.28" fill="#4a6fa5" stroke="#33507a" stroke-width="0.5"/><circle cx="10.5" cy="10.5" r="1.8" fill="#fff"/></svg><svg class="ic" style="left:955px;top:1111px" width="14" height="14"><rect x="0.5" y="0.5" width="13" height="13" rx="1.5" fill="#cfcfcf" stroke="#b4b4b4"/><path d="M4 4l6 6M10 4l-6 6" stroke="#fff" stroke-width="2"/></svg><div style="position:absolute;left:982px;top:1107px;width:137px;height:23px;background:#fff;border:1px solid #d9d9d9;border-top:none"></div><svg class="ic" style="left:994.5px;top:1110.5px" width="16" height="16" viewBox="0 0 16 16"><defs><linearGradient id="gFm982" x1="0" y1="0" x2="1" y2="1"><stop offset="0" stop-color="#ff3030"/><stop offset="1" stop-color="#a00010"/></linearGradient></defs><path d="M0.5 0.5h9v3.5h-5.5v2.5h3.5v3h-3.5v6h-3.5z" fill="url(#gFm982)"/><polygon points="15.99,9.41 14.42,11.28 15.16,13.61 12.72,13.83 11.59,15.99 9.72,14.42 7.39,15.16 7.17,12.72 5.01,11.59 6.58,9.72 5.84,7.39 8.28,7.17 9.41,5.01 11.28,6.58 13.61,5.84 13.83,8.28" fill="#4a6fa5" stroke="#33507a" stroke-width="0.5"/><circle cx="10.5" cy="10.5" r="1.8" fill="#fff"/></svg><svg class="ic" style="left:1092.3px;top:1112px" width="14" height="14"><rect x="0.5" y="0.5" width="13" height="13" rx="1.5" fill="#e8734a" stroke="#c85a34"/><path d="M4 4l6 6M10 4l-6 6" stroke="#fff" stroke-width="2"/></svg><div class="t" style="left:22.78px;top:6px;font-size:12px;font-weight:400;color:#000;transform:scaleX(0.9200);transform-origin:0 0">FreeCAD 0.18</div><div class="t" style="left:7.61px;top:28px;font-size:12px;font-weight:400;color:#000;transform:scaleX(0.9857);transform-origin:0 0">Файл</div><div class="t" style="left:52.92px;top:28px;font-size:12px;font-weight:400;color:#000;transform:scaleX(0.9821);transform-origin:0 0">Правка</div><div class="t" style="left:108.89px;top:28px;font-size:12px;font-weight:400;color:#000;transform:scaleX(0.9095);transform-origin:0 0">Вид</div><div class="t" style="left:144.68px;top:28px;font-size:12px;font-weight:400;color:#000;transform:scaleX(1.0219);transform-origin:0 0">Инструменты</div><div class="t" style="left:236.46px;top:28px;font-size:12px;font-weight:400;color:#000;transform:scaleX(1.0408);transform-origin:0 0">Макросы</div><div class="t" style="left:305.70px;top:28px;font-size:12px;font-weight:400;color:#000;transform:scaleX(0.9643);transform-origin:0 0">Окна</div><div class="t" style="left:348.62px;top:28px;font-size:12px;font-weight:400;color:#000;transform:scaleX(0.9804);transform-origin:0 0">Справка</div><div class="t" style="left:3.61px;top:119px;font-size:11px;font-weight:400;color:#000;transform:scaleX(0.9879);transform-origin:0 0">Комбо панель</div><div class="t" style="left:10.59px;top:140px;font-size:11px;font-weight:400;color:#000;transform:scaleX(1.0105);transform-origin:0 0">Модель</div><div class="t" style="left:73.66px;top:141px;font-size:11px;font-weight:400;color:#000;transform:scaleX(1.0443);transform-origin:0 0">Задачи</div><div class="t" style="left:6.69px;top:163px;font-size:12px;font-weight:400;color:#000;transform:scaleX(1.0061);transform-origin:0 0">Метки и атрибуты</div><div class="t" style="left:5.87px;top:183px;font-size:12px;font-weight:400;color:#000;transform:scaleX(1.0290);transform-origin:0 0">Приложение</div><div class="t" style="left:47.87px;top:201px;font-size:12px;font-weight:700;color:#000;transform:scaleX(0.9820);transform-origin:0 0">Unnamed4</div><div class="t" style="left:67.14px;top:219px;font-size:12px;font-weight:400;color:#000;transform:scaleX(0.9615);transform-origin:0 0">задня часть</div><div class="t" style="left:8.29px;top:628px;font-size:12px;font-weight:400;color:#000;transform:scaleX(1.0078);transform-origin:0 0">Свойство</div><div class="t" style="left:107.88px;top:628px;font-size:12px;font-weight:400;color:#000;transform:scaleX(1.0231);transform-origin:0 0">Значение</div><div class="t" style="left:12.82px;top:1114px;font-size:11px;font-weight:400;color:#000;transform:scaleX(0.9342);transform-origin:0 0">Вид</div><div class="t" style="left:57.30px;top:1115px;font-size:11px;font-weight:400;color:#000;transform:scaleX(0.9923);transform-origin:0 0">Данные</div><div class="t" style="left:302.74px;top:1114px;font-size:11px;font-weight:400;color:#000;transform:scaleX(1.0112);transform-origin:0 0">Стартовая страница</div><div class="t" style="left:471.48px;top:1114px;font-size:11px;font-weight:400;color:#000;transform:scaleX(1.0227);transform-origin:0 0">Unnamed : 1*</div><div class="t" style="left:602.74px;top:1114px;font-size:11px;font-weight:400;color:#000;transform:scaleX(1.0090);transform-origin:0 0">Unnamed1 : 1*</div><div class="t" style="left:739.48px;top:1114px;font-size:11px;font-weight:400;color:#000;transform:scaleX(1.0194);transform-origin:0 0">Unnamed2 : 1*</div><div class="t" style="left:876.48px;top:1114px;font-size:11px;font-weight:400;color:#000;transform:scaleX(1.0181);transform-origin:0 0">Unnamed3 : 1*</div><div class="t" style="left:1013.68px;top:1115px;font-size:11px;font-weight:400;color:#000;transform:scaleX(1.0208);transform-origin:0 0">Unnamed4 : 1*</div><div class="t" style="left:433.60px;top:56px;font-size:12px;font-weight:400;color:#000;transform:scaleX(0.9958);transform-origin:0 0">Start</div></body></html>
